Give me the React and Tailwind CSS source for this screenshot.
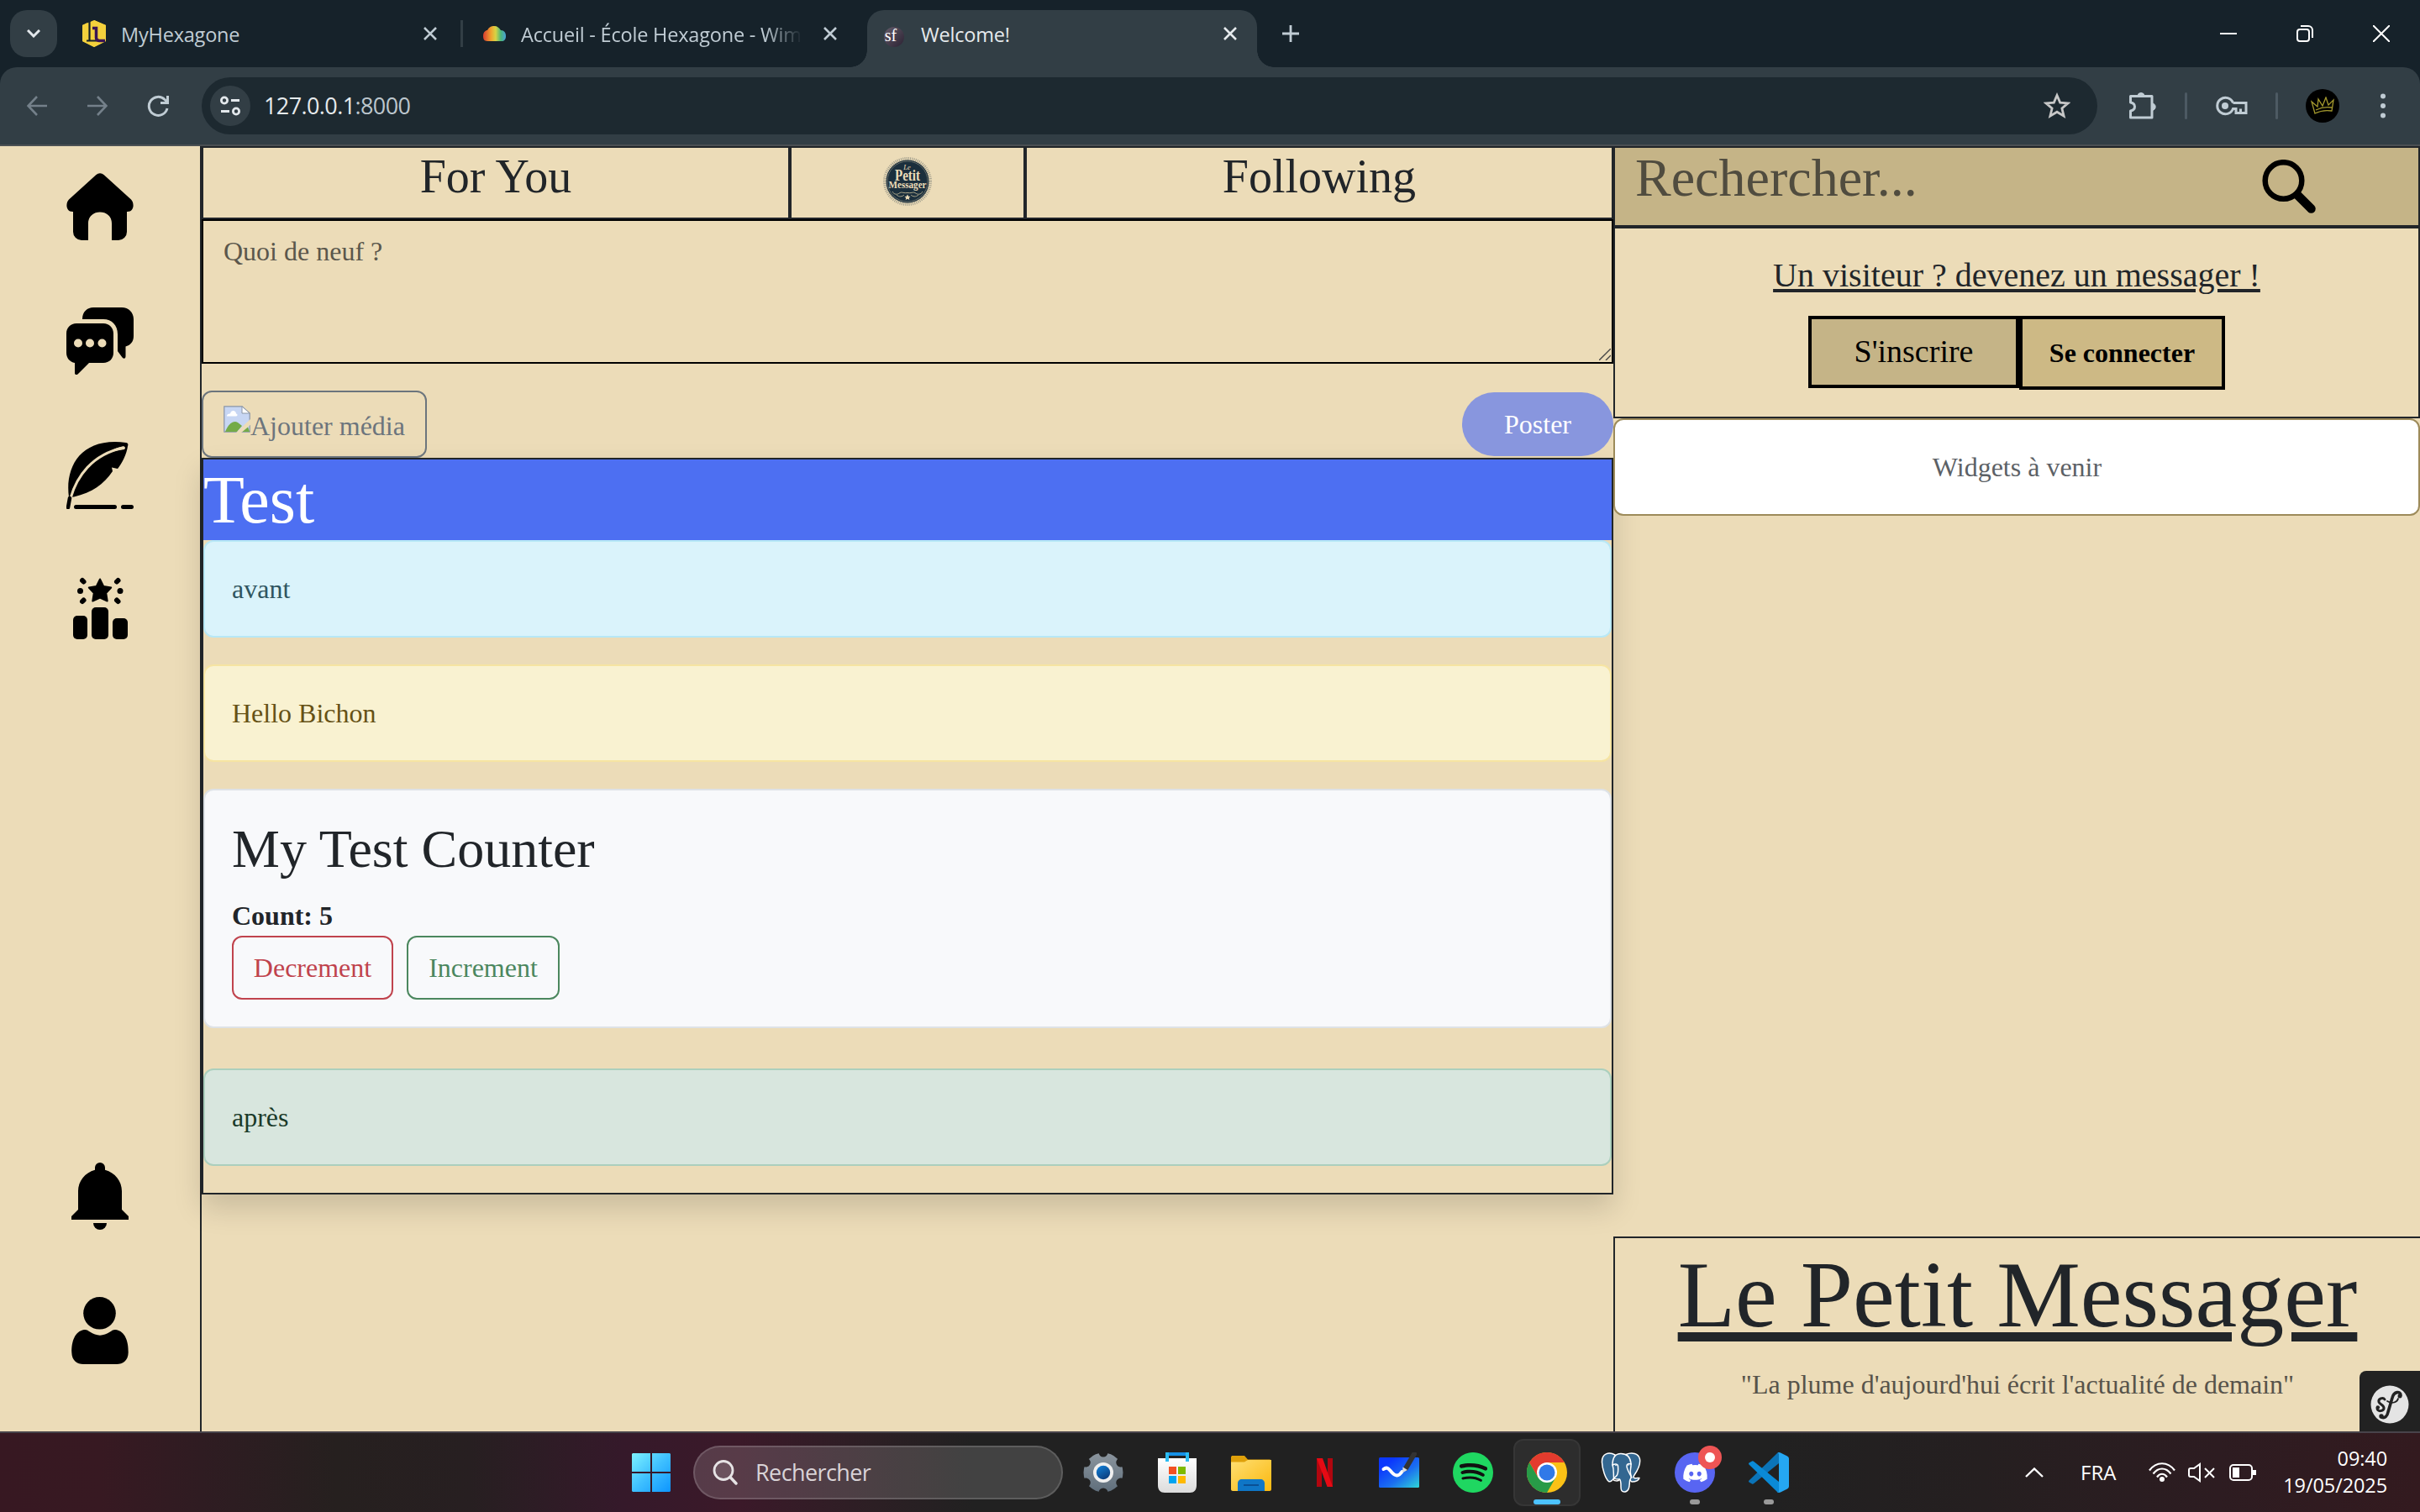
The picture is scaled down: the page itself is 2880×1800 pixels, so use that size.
import React from "react";
import { FaDiscord, FaSpotify } from "react-icons/fa";

const UI = "font-['Open_Sans',sans-serif]";

function Cross({ className = "" }) {
  return (
    <svg viewBox="0 0 16 16" className={"h-4 w-4 shrink-0 " + className} fill="none" stroke="currentColor" strokeWidth="2.6">
      <path d="M1 1 15 15M15 1 1 15" />
    </svg>
  );
}

function TabStrip() {
  return (
    <div className={"flex h-20 shrink-0 items-center bg-[#16222a] pl-3 text-[#c0ccd4] " + UI}>
      <div className="flex h-14 w-14 items-center justify-center rounded-[20px] bg-[#323e45] text-[#e3e8ec]">
        <svg viewBox="0 0 16 10" className="h-[10px] w-4" fill="none" stroke="currentColor" strokeWidth="3">
          <path d="M1 1 8 8 15 1" />
        </svg>
      </div>
      <div className="flex h-8 w-[483px] items-center border-r-[3px] border-[#323e45] pr-7 pl-[29px]">
        <svg viewBox="0 0 30 32" className="h-8 w-[30px] shrink-0">
          <path d="M13 0v23h6V8h-4V0l14 6v19l-14 7-14-7V6l6-3v20h8" fill="#f4d13c" />
          <path d="M15 0 29 6v19l-14 7-14-7V6z" fill="#f4d13c" />
          <path d="M9.500 0v24.500M6 24.500h12" stroke="#16222a" strokeWidth="2.200" />
          <path d="M13 9.500h4.500V21c0 2.500 1.500 3.500 4 3.500H28" stroke="#3a1553" strokeWidth="3.500" fill="none" />
        </svg>
        <span className="ml-[17px] pt-[3px] text-[23.5px] tracking-[-0.2px]">MyHexagone</span>
        <Cross className="ml-auto" />
      </div>
      <div className="flex h-8 w-[445px] items-center pl-6">
        <svg viewBox="0 0 27 18" className="h-[18px] w-[27px] shrink-0">
          <defs>
            <linearGradient id="rainbow">
              <stop offset="0" stopColor="#d83b2f" />
              <stop offset=".35" stopColor="#f0a32f" />
              <stop offset=".55" stopColor="#d8d444" />
              <stop offset=".78" stopColor="#4db87a" />
              <stop offset="1" stopColor="#4aa3d8" />
            </linearGradient>
          </defs>
          <path d="M5 18C1 18 0 15 0 12c0-5 3-7 5-7C7 1 10 0 13 0c4 0 6 2 8 5 4 0 6 3 6 7s-2 6-5 6z" fill="url(#rainbow)" />
        </svg>
        <span className="ml-[18px] w-[345px] shrink-0 pt-[3px] text-[23.5px] tracking-[-0.2px] whitespace-nowrap [mask-image:linear-gradient(90deg,#000_84%,transparent_97%)]">
          Accueil - École Hexagone - Wim
        </span>
        <Cross className="ml-auto" />
      </div>
      <div className="relative ml-9 flex h-[68px] w-[464px] items-center self-end rounded-t-[20px] bg-[#323e45] pr-6 pb-3 pl-5 text-[#e6eaed]">
        <span className="absolute bottom-0 -left-5 h-5 w-5 bg-[radial-gradient(circle_at_0_0,transparent_19.5px,#323e45_20px)]" />
        <span className="absolute -right-5 bottom-0 h-5 w-5 bg-[radial-gradient(circle_at_100%_0,transparent_19.5px,#323e45_20px)]" />
        <span className="mt-2 flex h-6 w-6 items-center justify-center rounded-full bg-gradient-to-br from-[#655d6b] to-[#2c2233] pr-2 pb-1 font-['Liberation_Serif',serif] text-[20px] leading-none text-white">sf</span>
        <span className="ml-5 pt-[3px] text-[23.5px] tracking-[-0.2px]">Welcome!</span>
        <Cross className="ml-auto" />
      </div>
      <svg viewBox="0 0 20 20" className="ml-[30px] h-5 w-5" fill="none" stroke="currentColor" strokeWidth="2.8">
        <path d="M10 0v20M0 10h20" />
      </svg>
      <div className="ml-auto flex items-center gap-[71px] pr-9 text-white">
        <svg viewBox="0 0 20 20" className="h-5 w-5" fill="none" stroke="currentColor" strokeWidth="2"><path d="M0 10h20" /></svg>
        <svg viewBox="0 0 20 20" className="h-5 w-5" fill="none" stroke="currentColor" strokeWidth="2">
          <rect x="1" y="5" width="14" height="14" rx="3" />
          <path d="M5 1h9a5 5 0 0 1 5 5v9" />
        </svg>
        <svg viewBox="0 0 20 20" className="h-5 w-5" fill="none" stroke="currentColor" strokeWidth="2"><path d="M0 0 20 20M20 0 0 20" /></svg>
      </div>
    </div>
  );
}

function Toolbar() {
  return (
    <div className="h-[94px] shrink-0 bg-[#16222a]">
      <div className={"flex h-full items-center rounded-t-[20px] border-b-2 border-[#4b5053] bg-[#323e45] pl-8 text-[#c0ccd4] " + UI}>
        <svg viewBox="0 0 24 24" className="h-6 w-6 text-[#74808a]" fill="none" stroke="currentColor" strokeWidth="2.6"><path d="M24 12H2M12 1 1.5 12 12 23" /></svg>
        <svg viewBox="0 0 24 24" className="ml-12 h-6 w-6 text-[#74808a]" fill="none" stroke="currentColor" strokeWidth="2.6"><path d="M0 12h22M12 1l10.500 11L12 23" /></svg>
        <svg viewBox="0 0 26 26" className="ml-[47px] h-[26px] w-[26px]" fill="none" stroke="currentColor" strokeWidth="3">
          <path d="M24 16A11 11 0 1 1 21 5.500L24 8.500" />
          <path d="M24.500 1v8.500H16" />
        </svg>
        <div className="ml-[39px] flex h-[68px] w-[2256px] items-center rounded-full bg-[#1d2930] pr-8 pl-[10px]">
          <div className="flex h-12 w-12 items-center justify-center rounded-full bg-[#323e45]">
            <svg viewBox="0 0 24 24" className="h-6 w-6" fill="none" stroke="#e3e8ec" strokeWidth="2.8">
              <circle cx="5" cy="5.500" r="3.600" /><path d="M13 5.500h10M1 18.500h10" /><circle cx="19" cy="18.500" r="3.600" />
            </svg>
          </div>
          <span className="ml-4 text-[27px] tracking-[-0.6px] text-[#e6eaed]">127.0.0.1<span className="text-[#bcc6cd]">:8000</span></span>
          <svg viewBox="0 0 32 32" className="ml-auto h-8 w-8" fill="none" stroke="#c7c7c7" strokeWidth="2.800">
            <path d="M16 3.500l3.700 8.600 9.300.8-7.100 6.100 2.200 9.100-8.100-4.900-8.100 4.900 2.200-9.100L3 12.900l9.300-.8z" />
          </svg>
        </div>
        <svg viewBox="0 0 34 34" className="ml-[37px] h-[34px] w-[34px]" fill="none" stroke="currentColor" strokeWidth="3">
          <path d="M2.500 5.500H28V31H2.500v-8c3-.5 5-2.500 5-5s-2-4.500-5-5z" strokeLinejoin="round" />
          <path d="M11 5.500a4 4 0 0 1 8 0zM28 14a4.200 4.200 0 0 1 0 8.400z" fill="currentColor" strokeWidth="1" />
        </svg>
        <span className="ml-[33px] h-8 w-[3px] rounded bg-[#4d5a63]" />
        <svg viewBox="0 0 38 24" className="ml-[34px] h-6 w-[38px]" fill="none" stroke="currentColor" strokeWidth="3">
          <path d="M20.500 8.500A9.700 9.700 0 1 0 20.500 15.500H24V20.500H29.500V15.500M20.500 8.500H36V20.500H30" />
          <circle cx="11" cy="12" r="4" fill="currentColor" stroke="none" />
        </svg>
        <span className="ml-[33px] h-8 w-[3px] rounded bg-[#4d5a63]" />
        <div className="ml-[33px] flex h-10 w-10 items-center justify-center rounded-full bg-black">
          <svg viewBox="0 0 28 22" className="h-[22px] w-7" fill="none" stroke="#a59a2e" strokeWidth="1.300">
            <path d="M5 20 1 6l7 6 1-9 5 8 4-10 3 9 6-6-2 13c-6-1-14 0-20 3zM6 16c6-3 13-4 19-3" />
          </svg>
        </div>
        <svg viewBox="0 0 8 32" className="ml-12 h-8 w-2" fill="currentColor">
          <circle cx="4" cy="4.500" r="3" /><circle cx="4" cy="16" r="3" /><circle cx="4" cy="27.500" r="3" />
        </svg>
      </div>
    </div>
  );
}

function NavIcon({ children }) {
  return <svg viewBox="0 0 80 80" className="h-20 w-20" fill="#000">{children}</svg>;
}

function Sidebar() {
  return (
    <nav className="flex w-60 shrink-0 flex-col items-center justify-between border-r-2 border-[#212529] pt-8 pb-20">
      <div className="flex flex-col gap-20">
        <NavIcon>
          <path d="M35.500 2a7 7 0 0 1 9 0L77 31.500c4 4 4 14.500-4.500 14.500H72v24a10 10 0 0 1-10 10h-8V60c0-18-28-18-28 0v20h-8A10 10 0 0 1 8 70V46h-.5C-1 46-1 35.500 3 31.500z" />
        </NavIcon>
        <NavIcon>
          <path d="M19 14C19 5 25 0 32 0h34c8 0 14 6 14 14v20c0 7-4 11-9.500 12.500V58c0 3-2 3.500-4 1.500L61 52V32c0-11-7-18-17-18z" />
          <path d="M12 19h32c7 0 12 5 12 12v23c0 7-5 12-12 12H27L14 79c-2 2-4 1-4-1V66C4 65 0 60 0 54V31c0-7 5-12 12-12z" />
          <g fill="#ecdcb8"><circle cx="14" cy="42.500" r="5" /><circle cx="28" cy="42.500" r="5" /><circle cx="42.500" cy="42.500" r="5" /></g>
        </NavIcon>
        <NavIcon>
          <path d="M3 66C-2 30 17-6 71 1c2 .3 3 2 2 4-1 9-7 21-12 27l-7-1.500 1 4.500c-11 16-24 25-46 30.500z" />
          <path d="M5 67C12 42 30 15 68 7" fill="none" stroke="#ecdcb8" strokeWidth="3" strokeLinecap="round" />
          <path d="M50 12.500C58 7.500 64 5.500 68 5.500c2 0 2.500 2.500 1 3.500-6 1-11 2-19 3.500z" fill="#ecdcb8" />
          <path d="M4 67 2 78" stroke="#000" strokeWidth="4.500" strokeLinecap="round" />
          <path d="M11.500 77.500h46M67.500 77.500h10" stroke="#000" strokeWidth="5" strokeLinecap="round" />
        </NavIcon>
        <NavIcon>
          <rect x="8" y="47" width="17" height="28" rx="5" /><rect x="30" y="37" width="20" height="38" rx="5" /><rect x="55" y="50" width="18" height="25" rx="5" />
          <path d="M40 3.500 44.200 12l9 1.500-6 6.500 1.500 9.500-8.700-4-8.700 4 1.500-9.500-6-6.500 9-1.500z" stroke="#000" strokeWidth="2" strokeLinejoin="round" />
          <circle cx="16.500" cy="17.500" r="3.500" /><circle cx="64" cy="17.500" r="3.500" />
          <path d="M19 5l1.500 1.500M61.500 5 60 6.500M19 30l1.500-1.500M61.500 30 60 28.500" stroke="#000" strokeWidth="6" strokeLinecap="round" />
        </NavIcon>
      </div>
      <div className="flex flex-col gap-20">
        <NavIcon>
          <path d="M34 6a6 6 0 0 1 12 0v2.700C58 12 66 22 66 34v22l8 8v4H6v-4l8-8V34C14 22 22 12 34 8.700z" />
          <path d="M32 72h16a8 8 0 0 1-16 0z" />
        </NavIcon>
        <NavIcon>
          <circle cx="39.500" cy="19.300" r="19.300" />
          <path d="M21 39c3-.5 5 1 7 2.500 8 5.500 16 5.500 24 0 2-1.500 4-3 7-2.500 11 2 15 14 14.700 27C73.500 76 67 80 60 80H20C13 80 6.500 76 6.300 66 6 53 10 41 21 39z" />
        </NavIcon>
      </div>
    </nav>
  );
}

const alertBox = "rounded-xl border-2 p-8 leading-[48px]";

function Feed() {
  return (
    <main className="relative z-10 w-[1680px] shrink-0">
      <div className="grid h-[87px] grid-cols-[700px_280px_700px] text-center text-[56px] leading-[68px]">
        <div className="border-2 border-[#212529]">For You</div>
        <div className="flex items-center justify-center border-2 border-[#212529]">
          <svg viewBox="0 0 60 60" className="mt-[-3px] h-[60px] w-[60px]">
            <circle cx="30" cy="30" r="27" fill="none" stroke="#1b2f3d" strokeOpacity=".35" strokeWidth="4" strokeDasharray="1 1.200" />
            <circle cx="30" cy="30" r="25.500" fill="#1b2f3d" />
            <circle cx="30" cy="30" r="24" fill="none" stroke="#8e8f80" strokeWidth=".6" />
            <g fill="#ecdcb8" textAnchor="middle" fontFamily="'Liberation Serif',serif" fontWeight="bold">
              <text x="29.500" y="16" fontSize="8.500" fontStyle="italic" fontWeight="normal">Le</text>
              <text x="30" y="29" fontSize="19" textLength="30" lengthAdjust="spacingAndGlyphs">Petit</text>
              <text x="30" y="38" fontSize="13" textLength="45" lengthAdjust="spacingAndGlyphs">Messager</text>
            </g>
            <path d="M30 45.500l1.200 2.200 2.300.3-1.700 1.600.5 2.400-2.300-1.200-2.300 1.200.5-2.400-1.700-1.600 2.300-.3z" fill="#ecdcb8" />
            <path d="M12 42c2 4 6 4 9 1.500 2-1.500 5 1 9 0 4 1 7-1.500 9 0 3 2.500 7 2.500 9-1.500M17 46c3 3 7 2 9 0M43 46c-3 3-7 2-9 0" fill="none" stroke="#a9a488" strokeWidth="1" />
          </svg>
        </div>
        <div className="border-2 border-[#212529]">Following</div>
      </div>
      <div className="relative h-[172px] border-2 border-black px-6 pt-3 text-[32px] leading-[48px] text-[#5b574c]">
        Quoi de neuf ?
        <svg viewBox="0 0 14 14" className="absolute right-px bottom-0.5 h-[14px] w-[14px]" stroke="#444" strokeWidth="1.400"><path d="M0 14 14 0M8 14l6-6" /></svg>
      </div>
      <div className="mt-8 flex h-20 items-center justify-between">
        <div className="flex h-20 w-[268px] items-start rounded-xl border-2 border-[#6c757d] pl-6 text-[32px] text-[#6c757d]">
          <svg viewBox="0 0 32 32" className="mt-4 h-8 w-8 shrink-0">
            <path d="M.8.800H22L31.200 9v22.200H.8z" fill="#c7d6f3" stroke="#8b95a5" strokeWidth="1.200" />
            <path d="M22 .8V9h9.200z" fill="#fff" stroke="#8b95a5" />
            <path d="M4 12.500c0-3 3-3 4-3 1-5 7-4 7 0 2 0 2 3 0 3z" fill="#fff" />
            <path d="M2 31C6 21 12 17 17 20l5 4-6 7zM22 31l7-6 2 6z" fill="#74ab48" />
            <path d="M14 33 33 15v7L20 33z" fill="#ecdcb8" />
          </svg>
          <span className="mt-4 leading-[48px]">Ajouter média</span>
        </div>
        <div className="flex h-[76px] w-[180px] items-center justify-center rounded-full bg-[#8896de] text-[32px] text-white">Poster</div>
      </div>
      <section className="h-[877px] border-2 border-[#212529] text-[32px] shadow-[0_16px_32px_rgba(0,0,0,0.15)]">
        <h1 className="h-24 bg-[#4d6ff2] text-[80px] leading-[96px] text-white">Test</h1>
        <div className={alertBox + " border-[#b8e8f6] bg-[#daf3fb] text-[#2f5560]"}>avant</div>
        <div className={alertBox + " mt-8 border-[#f6e4a2] bg-[#f9f2d1] text-[#665115]"}>Hello Bichon</div>
        <div className={alertBox + " mt-8 border-[#dee2e6] bg-[#f8f9fb] text-[#212529]"}>
          <h2 className="mb-[17px] text-[64px] leading-[76px]">My Test Counter</h2>
          <p className="font-bold">Count: 5</p>
          <div className="flex gap-4">
            <span className="flex h-[76px] w-48 items-center justify-center rounded-xl border-2 border-[#c0434d] text-[#c0434d]">Decrement</span>
            <span className="flex h-[76px] w-[182px] items-center justify-center rounded-xl border-2 border-[#4b875e] text-[#4b875e]">Increment</span>
          </div>
        </div>
        <div className={alertBox + " mt-12 border-[#abcfbd] bg-[#d8e6de] text-[#1a3a29]"}>après</div>
      </section>
    </main>
  );
}

function RightColumn() {
  return (
    <aside className="relative z-20 flex w-[960px] shrink-0 flex-col">
      <div className="flex h-24 items-start justify-between border-2 border-[#212529] bg-[#c5b487] pr-[122px] pl-6 text-[64px] leading-[72px] text-[#504c3f]">
        <span>Rechercher...</span>
        <svg viewBox="0 0 64 64" className="mt-3.5 h-16 w-16" fill="none" stroke="#000">
          <circle cx="25.500" cy="25" r="21.800" strokeWidth="6.500" />
          <path d="M43 43 58.500 58.500" strokeWidth="10.500" strokeLinecap="round" />
        </svg>
      </div>
      <div className="flex h-[228px] flex-col items-center border-2 border-[#212529] pt-[26px]">
        <p className="text-[40px] leading-[60px] text-[#212529] underline decoration-4 underline-offset-[3px]">Un visiteur ? devenez un messager !</p>
        <div className="mt-[18px] flex items-start text-black">
          <span className="flex h-[86px] w-[251px] items-center justify-center border-4 border-black bg-[#c5b487] pb-px text-[38px]">S'inscrire</span>
          <span className="flex h-[88px] w-[245px] items-center justify-center border-4 border-black bg-[#cdb985] text-[32px] font-bold">Se connecter</span>
        </div>
      </div>
      <div className="flex h-[116px] items-center justify-center rounded-xl border-2 border-[#9d8b5a] bg-white pl-px text-[32px] text-[#5c6166]">Widgets à venir</div>
      <footer className="mt-auto flex h-[232px] flex-col items-center border-t-2 border-l-2 border-[#212529] text-center">
        <h1 className="text-[112px] leading-[134px] text-[#212529] underline decoration-[11px] underline-offset-[7px]">Le Petit Messager</h1>
        <p className="mt-4 text-[32px] leading-[48px] text-[#57534a]">"La plume d'aujourd'hui écrit l'actualité de demain"</p>
      </footer>
      <div className="absolute right-0 bottom-0 flex h-[72px] w-[72px] items-center justify-center rounded-tl-lg bg-[#222]">
        <svg viewBox="0 0 46 46" className="mt-2 h-[46px] w-[46px]">
          <circle cx="23" cy="23" r="22.500" fill="#e4e4e4" />
          <g fill="none" stroke="#222" strokeLinecap="round">
            <path d="M17 17c-2-3-8-1-7 3 1 3 7 4 6 8-1 3-7 4-8 0" strokeWidth="3" />
            <path d="M36 12c0-5-8-5-10 3l-5 17c-1 5-4 8-8 6" strokeWidth="3.600" />
            <path d="M20 19c6 4 12 1 13-3" strokeWidth="1.800" />
          </g>
          <g fill="#222"><circle cx="35" cy="13" r="2.500" /><circle cx="13" cy="37" r="2.700" /><circle cx="8.800" cy="26.500" r="2.300" /></g>
        </svg>
      </div>
    </aside>
  );
}

function Gear() {
  const teeth = [0, 60, 120, 180, 240, 300];
  return (
    <svg viewBox="0 0 48 48" className="h-12 w-12">
      <defs><linearGradient id="steel" x2="0" y2="1"><stop stopColor="#8b959e" /><stop offset="1" stopColor="#5f6e7b" /></linearGradient>
        <linearGradient id="hub" x2=".6" y2="1"><stop stopColor="#1183dc" /><stop offset="1" stopColor="#0b3f80" /></linearGradient>
        <mask id="notches"><rect width="48" height="48" fill="#fff" />
          {teeth.map((a) => (
            <circle key={a} cx="24" cy="0" r="5.500" fill="#000" transform={"rotate(" + a + " 24 24)"} />
          ))}
        </mask></defs>
      <circle cx="24" cy="24" r="23.500" fill="url(#steel)" mask="url(#notches)" />
      <circle cx="24" cy="24" r="12" fill="#f0f0f0" />
      <circle cx="24" cy="24" r="8.200" fill="url(#hub)" />
    </svg>
  );
}

function Elephant() {
  return (
    <svg viewBox="0 0 48 48" className="h-12 w-12" fill="#336791" stroke="#fff" strokeWidth="1.500" strokeLinejoin="round" strokeLinecap="round">
      <path d="M17 3C10-1 1 1 1.500 12c.4 8 4 19 8 22.500 3 1.500 5-2 7-5z" />
      <path d="M30 2.500C37-.5 45 1 46.500 8c1 6-3 14-6.500 19-1.500 2-1 3 0 3.500 2 .5 4 0 6 0-1 3-5 4.500-9 4.500L31 30z" />
      <path d="M14 15c0-9 4-13.500 10-13.500S35 5 36 13c.5 6-2 9 0 14.500 1 3-1 4-1.500 6.500-.5 5 0 12-5.500 13-4 .5-5-2-5-6 0-3 .3-7-1.500-9-3 0-6 .500-7-2-.5-5 .5-9-1.500-15z" />
      <path d="M14 15c3-1.500 6-1.500 6.500 1 .5 5 0 9-1 11-1.500 2-3 3-4.500 4.500 0 3 6 3 7.500 1" fill="none" />
      <path d="M36 14c-3-1-5.500 0-5 3 .5 4 3 8 6 13" fill="none" />
      <circle cx="18" cy="15.500" r=".8" fill="#fff" stroke="none" /><circle cx="33" cy="15" r=".8" fill="#fff" stroke="none" />
    </svg>
  );
}

function AppIcons() {
  return (
    <div className="ml-6 flex items-center gap-10">
      <Gear />
      <svg viewBox="0 0 48 48" className="h-12 w-12">
        <defs><linearGradient id="bag" x2="0" y2="1"><stop stopColor="#fff" /><stop offset="1" stopColor="#dcdcdc" /></linearGradient></defs>
        <path d="M1 7h46v32c0 6-3 9-8 9H9c-5 0-8-3-8-9z" fill="url(#bag)" />
        <path d="M12 11V2h24v9" fill="none" stroke="#2bbcf2" strokeWidth="4" />
        <path d="M14 2h20" stroke="#1590e6" strokeWidth="4" />
        <path fill="#f25022" d="M14 17h9v9h-9z" /><path fill="#7fba00" d="M25 17h9v9h-9z" /><path fill="#00a4ef" d="M14 28h9v9h-9z" /><path fill="#ffb900" d="M25 28h9v9h-9z" />
      </svg>
      <svg viewBox="0 0 48 48" className="h-12 w-12">
        <defs><linearGradient id="folder" x2="1" y2="1"><stop stopColor="#ffdf72" /><stop offset="1" stopColor="#fab80f" /></linearGradient></defs>
        <path d="M0 15V6c0-1.500 1-2 2-2h14l4 4.500h26c1 0 2 1 2 2V15z" fill="#dfa00a" />
        <path d="M0 11.500h16l4-2.500h28v35c0 1-1 2-2 2H2c-1 0-2-1-2-2z" fill="url(#folder)" />
        <path d="M8 46V37c0-3 2-5 5-5h22c3 0 5 2 5 5v9z" fill="#0f76c6" /><path d="M15 39h18" stroke="#0a4f94" strokeWidth="2" />
      </svg>
      <svg viewBox="0 0 48 48" className="h-12 w-12">
        <path d="M14 7h6v34h-6zM27 7h6v34h-6z" fill="#b1060f" /><path d="M14 7h7l12 34h-6.500z" fill="#e60a14" />
      </svg>
      <svg viewBox="0 0 48 48" className="h-12 w-12">
        <defs><linearGradient id="board" x2="1" y2="1"><stop offset=".2" stopColor="#0b37fd" /><stop offset=".6" stopColor="#1b6ff0" /><stop offset="1" stopColor="#2fd6d6" /></linearGradient></defs>
        <rect y="6" width="48" height="36" rx="1.500" fill="url(#board)" />
        <path d="M5.500 20c4-3 6-1 10 4 4 4.500 8 5 12-1" fill="none" stroke="#fff" strokeWidth="4" strokeLinecap="round" />
        <path d="M42 2 32 19" stroke="#333" strokeWidth="6" strokeLinecap="round" /><path d="m28.500 17.500 5.500 3.500-6 3.200z" fill="#ddd" />
      </svg>
      <span className="flex h-12 w-12 items-center justify-center rounded-full bg-[radial-gradient(circle,#111_60%,#1ed760_61%)]"><FaSpotify className="h-12 w-12 text-[#1fd761]" /></span>
      <div className="relative -mx-4 flex h-20 w-20 items-center justify-center rounded-xl border-2 border-[#363636] bg-[#2d2d2d]">
        <svg viewBox="0 0 48 48" className="h-12 w-12">
          <circle cx="24" cy="24" r="24" fill="#fbc116" />
          <path d="M3.200 12A24 24 0 0 1 44.800 12H24z" fill="#e33b2e" />
          <path d="M3.200 12A24 24 0 0 0 24 48L34.400 30 24 24 13.600 30z" fill="#289b48" />
          <path d="M3.200 12 13.600 30 24 24V12z" fill="#e33b2e" />
          <circle cx="24" cy="24" r="12" fill="#fff" /><circle cx="24" cy="24" r="9.500" fill="#3079e8" />
        </svg>
        <span className="absolute bottom-0 h-1.5 w-8 rounded-full bg-[#4cc2ff]" />
      </div>
      <Elephant />
      <div className="relative flex h-12 w-12 items-center justify-center rounded-full bg-[#5865f2]">
        <FaDiscord className="h-[31px] w-[31px] text-white" />
        <span className="absolute -top-2 -right-2 flex h-7 w-7 items-center justify-center rounded-full bg-[#ee5555]"><span className="h-3 w-3 rounded-full bg-white" /></span>
        <span className="absolute -bottom-3.5 h-1.5 w-3 rounded-full bg-[#9a9a9a]" />
      </div>
      <div className="relative flex h-12 w-12 justify-center">
        <svg viewBox="0 0 48 48" className="h-12 w-12">
          <path d="M.5 33.500c-.6.600-.6 1.500 0 2l3.500 2q1 .5 2-.3L36 13V0q-1 0-2 1z" fill="#0b74b8" />
          <path d="M.5 14.500c-.6-.6-.6-1.500 0-2l3.500-2q1-.5 2 .3L36 35v13q-1 0-2-1z" fill="#0a8ad6" />
          <path d="M34 47c1.500 1.500 3 1 4 .5l8-4q2-1 2-3v-33q0-2-2-3l-8-4c-1-.5-2.500-1-4 .5 1-.5 2 0 2 1.500v44c0 1.500-1 2-2 1z" fill="#25a7f2" />
        </svg>
        <span className="absolute -bottom-3.5 h-1.5 w-3 rounded-full bg-[#9a9a9a]" />
      </div>
    </div>
  );
}

function Taskbar() {
  return (
    <div className={"flex h-24 shrink-0 items-center border-t-2 border-[#48434a] bg-[linear-gradient(90deg,#371822_0px,#371922_120px,#2f1c22_240px,#26201f_400px,#271f21_560px,#35192a_740px,#3b1929_880px,#2c1f24_1040px,#212121_1160px,#212121_2100px,#251f20_2360px,#2d1c21_2640px,#331a1f_2880px)] pl-[752px] text-white " + UI}>
      <svg viewBox="0 0 46 46" className="h-[46px] w-[46px]">
        <defs><linearGradient id="win" gradientUnits="userSpaceOnUse" x1="0" y1="0" x2="46" y2="46"><stop stopColor="#7df2ff" /><stop offset=".5" stopColor="#3fc0ff" /><stop offset="1" stopColor="#0d95ff" /></linearGradient></defs>
        <path fill="url(#win)" d="M1 0h21v22H0V1zM24 0h21l1 1v21H24zM0 24h22v22H1l-1-1zM24 24h22v21l-1 1H24z" />
      </svg>
      <div className="ml-[27px] flex h-16 w-[440px] items-center rounded-full border-2 border-white/15 bg-white/15 pl-[21px]">
        <svg viewBox="0 0 30 30" className="h-[30px] w-[30px]" fill="none" stroke="#e6e3e5" strokeWidth="2.800" strokeLinecap="round">
          <circle cx="13" cy="12.500" r="11" fill="#fff" fillOpacity=".12" /><path d="M21 20.500 28 28" strokeWidth="3.400" />
        </svg>
        <span className="ml-[21px] pt-px text-[27px] tracking-[-0.6px] text-[#d9d3d7]">Rechercher</span>
      </div>
      <AppIcons />
      <div className="ml-auto flex items-center pr-[39px] text-[24px]">
        <svg viewBox="0 0 22 12" className="h-3 w-[22px]" fill="none" stroke="#fff" strokeWidth="2.400"><path d="M1 11 11 1.500 21 11" /></svg>
        <span className="ml-11 w-[41px]">FRA</span>
        <svg viewBox="0 0 32 24" className="ml-[40px] h-6 w-8" fill="none" stroke="#fff" strokeWidth="2.200">
          <path d="M1 9.500C9-1.500 23-1.500 31 9.500M5.500 13.500c6-8 15-8 21 0M10 17.500c3.500-5 8.500-5 12 0" /><circle cx="16" cy="20" r="3" fill="#fff" stroke="none" />
        </svg>
        <svg viewBox="0 0 32 24" className="ml-[15px] h-6 w-8" fill="none" stroke="#fff" strokeWidth="2">
          <path d="M14 2v20l-7-5H3q-2 0-2-2V9q0-2 2-2h4zM20 7l11 11M31 7 20 18" />
        </svg>
        <svg viewBox="0 0 32 20" className="ml-[17px] h-5 w-8" fill="none" stroke="#fff" strokeWidth="2">
          <rect x="1" y="1" width="26" height="18" rx="4" /><path d="M4 4h8v12H4zM28 7h4v6h-4z" fill="#fff" stroke="none" />
        </svg>
        <div className="mt-[-3px] ml-[23px] w-[133px] text-right text-[23.500px] leading-8 tracking-[-0.1px]">
          <div>09:40</div>
          <div>19/05/2025</div>
        </div>
      </div>
    </div>
  );
}

export default function App() {
  return (
    <div className="flex h-[1800px] w-[2880px] flex-col overflow-hidden bg-[#ecdcb8]">
      <TabStrip />
      <Toolbar />
      <div className="flex h-[1530px] overflow-hidden font-['Liberation_Serif',serif] text-[#212529]">
        <Sidebar />
        <Feed />
        <RightColumn />
      </div>
      <Taskbar />
    </div>
  );
}
